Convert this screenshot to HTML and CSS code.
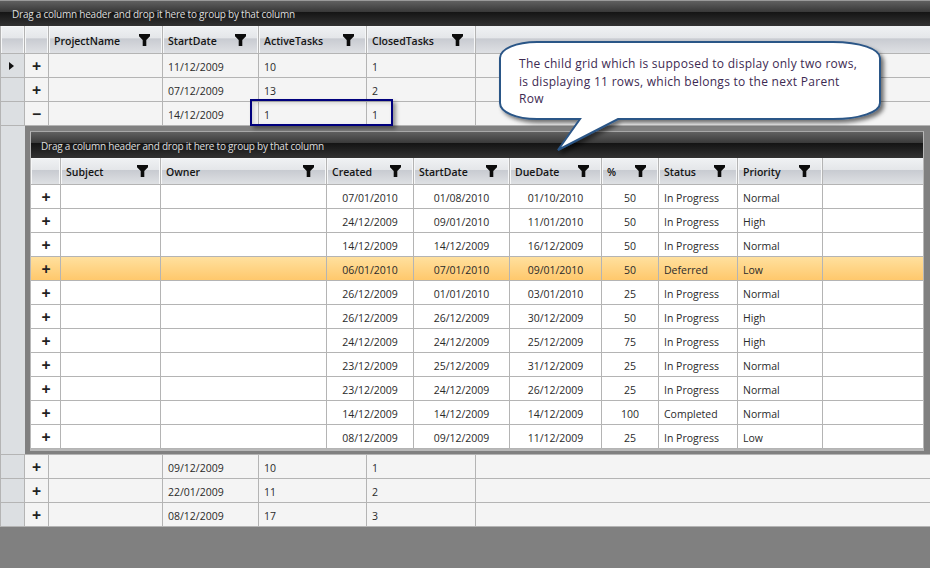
FILE: index.html
```html
<!DOCTYPE html>
<html>
<head>
<meta charset="utf-8">
<title>Nested grid</title>
<link rel="stylesheet" href="styles.css">
</head>
<body>
<svg class="defs" width="0" height="0"><defs>
<symbol id="flt" viewBox="0 0 11 12"><path d="M0 0H11V2.2L7.3 6V12H3.7V6L0 2.2Z"/></symbol>
</defs></svg>
<div class="page">
  <div class="panel outer-panel">Drag a column header and drop it here to group by that column</div>
  <div class="grid-row outer head">
    <div class="cell"></div><div class="cell"></div>
    <div class="cell h"><span>ProjectName</span><svg class="f"><use href="#flt"/></svg></div>
    <div class="cell h"><span>StartDate</span><svg class="f"><use href="#flt"/></svg></div>
    <div class="cell h"><span>ActiveTasks</span><svg class="f"><use href="#flt"/></svg></div>
    <div class="cell h"><span>ClosedTasks</span><svg class="f"><use href="#flt"/></svg></div>
    <div class="cell filler"></div>
  </div>
  <div class="grid-row outer row"><div class="cell ind"><svg class="tri" viewBox="0 0 5 8"><path d="M0 0L5 4L0 8Z"/></svg></div><div class="cell exp">+</div><div class="cell"></div><div class="cell t">11/12/2009</div><div class="cell t">10</div><div class="cell t">1</div><div class="cell filler"></div></div>
  <div class="grid-row outer row"><div class="cell ind"></div><div class="cell exp">+</div><div class="cell"></div><div class="cell t">07/12/2009</div><div class="cell t">13</div><div class="cell t">2</div><div class="cell filler"></div></div>
  <div class="grid-row outer row"><div class="cell ind"></div><div class="cell exp">−</div><div class="cell"></div><div class="cell t">14/12/2009</div><div class="cell t">1</div><div class="cell t">1</div><div class="cell filler"></div></div>

  <div class="detail">
    <div class="strip"></div>
    <div class="well">
      <div class="child">
        <div class="panel child-panel">Drag a column header and drop it here to group by that column</div>
        <div class="grid-row inner head ihead">
          <div class="cell"></div>
          <div class="cell h"><span>Subject</span><svg class="f"><use href="#flt"/></svg></div>
          <div class="cell h"><span>Owner</span><svg class="f"><use href="#flt"/></svg></div>
          <div class="cell h"><span>Created</span><svg class="f"><use href="#flt"/></svg></div>
          <div class="cell h"><span>StartDate</span><svg class="f"><use href="#flt"/></svg></div>
          <div class="cell h"><span>DueDate</span><svg class="f"><use href="#flt"/></svg></div>
          <div class="cell h"><span>%</span><svg class="f"><use href="#flt"/></svg></div>
          <div class="cell h"><span>Status</span><svg class="f"><use href="#flt"/></svg></div>
          <div class="cell h"><span>Priority</span><svg class="f"><use href="#flt"/></svg></div>
          <div class="cell filler"></div>
        </div>
        <div class="grid-row inner crow"><div class="cell exp">+</div><div class="cell"></div><div class="cell"></div><div class="cell c">07/01/2010</div><div class="cell c">01/08/2010</div><div class="cell c">01/10/2010</div><div class="cell c">50</div><div class="cell t">In Progress</div><div class="cell t">Normal</div><div class="cell filler"></div></div>
        <div class="grid-row inner crow"><div class="cell exp">+</div><div class="cell"></div><div class="cell"></div><div class="cell c">24/12/2009</div><div class="cell c">09/01/2010</div><div class="cell c">11/01/2010</div><div class="cell c">50</div><div class="cell t">In Progress</div><div class="cell t">High</div><div class="cell filler"></div></div>
        <div class="grid-row inner crow"><div class="cell exp">+</div><div class="cell"></div><div class="cell"></div><div class="cell c">14/12/2009</div><div class="cell c">14/12/2009</div><div class="cell c">16/12/2009</div><div class="cell c">50</div><div class="cell t">In Progress</div><div class="cell t">Normal</div><div class="cell filler"></div></div>
        <div class="grid-row inner crow sel"><div class="cell exp">+</div><div class="cell"></div><div class="cell"></div><div class="cell c">06/01/2010</div><div class="cell c">07/01/2010</div><div class="cell c">09/01/2010</div><div class="cell c">50</div><div class="cell t">Deferred</div><div class="cell t">Low</div><div class="cell filler"></div></div>
        <div class="grid-row inner crow"><div class="cell exp">+</div><div class="cell"></div><div class="cell"></div><div class="cell c">26/12/2009</div><div class="cell c">01/01/2010</div><div class="cell c">03/01/2010</div><div class="cell c">25</div><div class="cell t">In Progress</div><div class="cell t">Normal</div><div class="cell filler"></div></div>
        <div class="grid-row inner crow"><div class="cell exp">+</div><div class="cell"></div><div class="cell"></div><div class="cell c">26/12/2009</div><div class="cell c">26/12/2009</div><div class="cell c">30/12/2009</div><div class="cell c">50</div><div class="cell t">In Progress</div><div class="cell t">High</div><div class="cell filler"></div></div>
        <div class="grid-row inner crow"><div class="cell exp">+</div><div class="cell"></div><div class="cell"></div><div class="cell c">24/12/2009</div><div class="cell c">24/12/2009</div><div class="cell c">25/12/2009</div><div class="cell c">75</div><div class="cell t">In Progress</div><div class="cell t">High</div><div class="cell filler"></div></div>
        <div class="grid-row inner crow"><div class="cell exp">+</div><div class="cell"></div><div class="cell"></div><div class="cell c">23/12/2009</div><div class="cell c">25/12/2009</div><div class="cell c">31/12/2009</div><div class="cell c">25</div><div class="cell t">In Progress</div><div class="cell t">Normal</div><div class="cell filler"></div></div>
        <div class="grid-row inner crow"><div class="cell exp">+</div><div class="cell"></div><div class="cell"></div><div class="cell c">23/12/2009</div><div class="cell c">24/12/2009</div><div class="cell c">26/12/2009</div><div class="cell c">25</div><div class="cell t">In Progress</div><div class="cell t">Normal</div><div class="cell filler"></div></div>
        <div class="grid-row inner crow"><div class="cell exp">+</div><div class="cell"></div><div class="cell"></div><div class="cell c">14/12/2009</div><div class="cell c">14/12/2009</div><div class="cell c">14/12/2009</div><div class="cell c">100</div><div class="cell t">Completed</div><div class="cell t">Normal</div><div class="cell filler"></div></div>
        <div class="grid-row inner crow"><div class="cell exp">+</div><div class="cell"></div><div class="cell"></div><div class="cell c">08/12/2009</div><div class="cell c">09/12/2009</div><div class="cell c">11/12/2009</div><div class="cell c">25</div><div class="cell t">In Progress</div><div class="cell t">Low</div><div class="cell filler"></div></div>
      </div>
    </div>
  </div>

  <div class="grid-row outer row"><div class="cell ind"></div><div class="cell exp">+</div><div class="cell"></div><div class="cell t">09/12/2009</div><div class="cell t">10</div><div class="cell t">1</div><div class="cell filler"></div></div>
  <div class="grid-row outer row"><div class="cell ind"></div><div class="cell exp">+</div><div class="cell"></div><div class="cell t">22/01/2009</div><div class="cell t">11</div><div class="cell t">2</div><div class="cell filler"></div></div>
  <div class="grid-row outer row"><div class="cell ind"></div><div class="cell exp">+</div><div class="cell"></div><div class="cell t">08/12/2009</div><div class="cell t">17</div><div class="cell t">3</div><div class="cell filler"></div></div>

  <div class="focus"></div>
  <div class="callout">
    <svg class="bubble" width="400" height="120" viewBox="0 0 400 120">
      <defs><filter id="sh" x="-5%" y="-5%" width="112%" height="125%"><feDropShadow dx="3" dy="3" stdDeviation="2" flood-color="#000" flood-opacity=".55"/></filter></defs>
      <path filter="url(#sh)" d="M39 2H335C362 2 382 9 382 18V63C382 72 362 79 335 79H120L60 110L82 79H39C18 79 2 72 2 63V18C2 9 18 2 39 2Z" fill="#fff" stroke="#2c5687" stroke-width="2"/>
    </svg>
    <p class="note">The child grid which is supposed to display only two rows, is displaying 11 rows, which belongs to the next Parent Row</p>
  </div>
</div>
</body>
</html>
```
FILE: styles.css
```css
* { box-sizing: border-box; }
html, body { margin: 0; height: 100%; }
body { background: #808080; overflow: hidden; font-family: "Open Sans", "Liberation Sans", sans-serif; font-size: 10.5px; color: #2a2a2a; }
.defs { position: absolute; }
.page { position: relative; width: 930px; height: 568px; background: #808080; }

.panel { color: #dedede; font-size: 10px; letter-spacing: -.23px; display: flex; align-items: flex-end; white-space: nowrap; background: linear-gradient(#606060 0, #3a3a3a 42%, #141414 43%, #323232 100%); }
.outer-panel { height: 26px; padding: 0 0 5px 12px; border-top: 1px solid #9a9a9a; }
.child-panel { height: 26px; padding: 0 0 5px 10px; }

.grid-row { display: grid; }
.outer { grid-template-columns: 24px 24px 114px 96px 108px 109px 1fr; border-left: 1px solid #b4b4b4; }
.inner { grid-template-columns: 30px 100px 166px 87px 96px 92px 57px 79px 85px 1fr; }

.cell { border-right: 1px solid #b4b4b4; border-bottom: 1px solid #b4b4b4; display: flex; align-items: center; min-width: 0; white-space: nowrap; }
.filler { border-right: 0; }

.head { height: 28px; background: linear-gradient(#f0f2f4 0, #e4e6e9 44%, #c8cbd1 45%, #e0e2e5 100%); }
.ihead { height: 27px; }
.head .cell { box-shadow: inset 1px 1px 0 #f6f7f8, inset -1px 0 0 #f6f7f8; }
.head .filler { box-shadow: none; }
.h { justify-content: space-between; padding: 2px 12px 0 5px; font-weight: 600; color: #141414; }
.f { width: 11px; height: 12px; margin-top: -2px; fill: #0c0c0c; flex: none; }

.row { height: 24px; background: #f4f4f4; }
.crow { height: 24px; background: #fff; }
.sel { background: linear-gradient(#ffe09e, #ffc76a); }
.t { padding-left: 5px; padding-top: 2px; }
.c { justify-content: center; padding-top: 2px; }
.ind { background: #dcdfe2; justify-content: center; padding-right: 2px; }
.tri { width: 5px; height: 8px; fill: #111; }
.exp { justify-content: center; padding-top: 1px; font-size: 16px; font-weight: 700; color: #222; line-height: 1; }
.inner .exp { padding-left: 1px; }

.detail { display: flex; height: 329px; border-left: 1px solid #b4b4b4; border-bottom: 1px solid #b4b4b4; }
.strip { width: 24px; background: #dcdfe2; }
.well { flex: 1; padding: 5px 6px 3px 5px; background: #808080; }
.child { height: 320px; border: 1px solid #b8b8b8; border-bottom-width: 2px; border-top-color: #a8a8a8; background: #fff; }

.focus { position: absolute; left: 250px; top: 99px; width: 143px; height: 27px; border: 2px solid #00007d; box-shadow: 3px 3px 4px rgba(0,0,0,.4), inset 2px 2px 4px rgba(0,0,0,.15); }

.callout { position: absolute; left: 498px; top: 40px; width: 400px; height: 120px; }
.bubble { display: block; }
.note { position: absolute; left: 21px; top: 15px; width: 346px; margin: 0; font-size: 12px; line-height: 17.5px; color: #3d2a52; letter-spacing: .28px; }
```
